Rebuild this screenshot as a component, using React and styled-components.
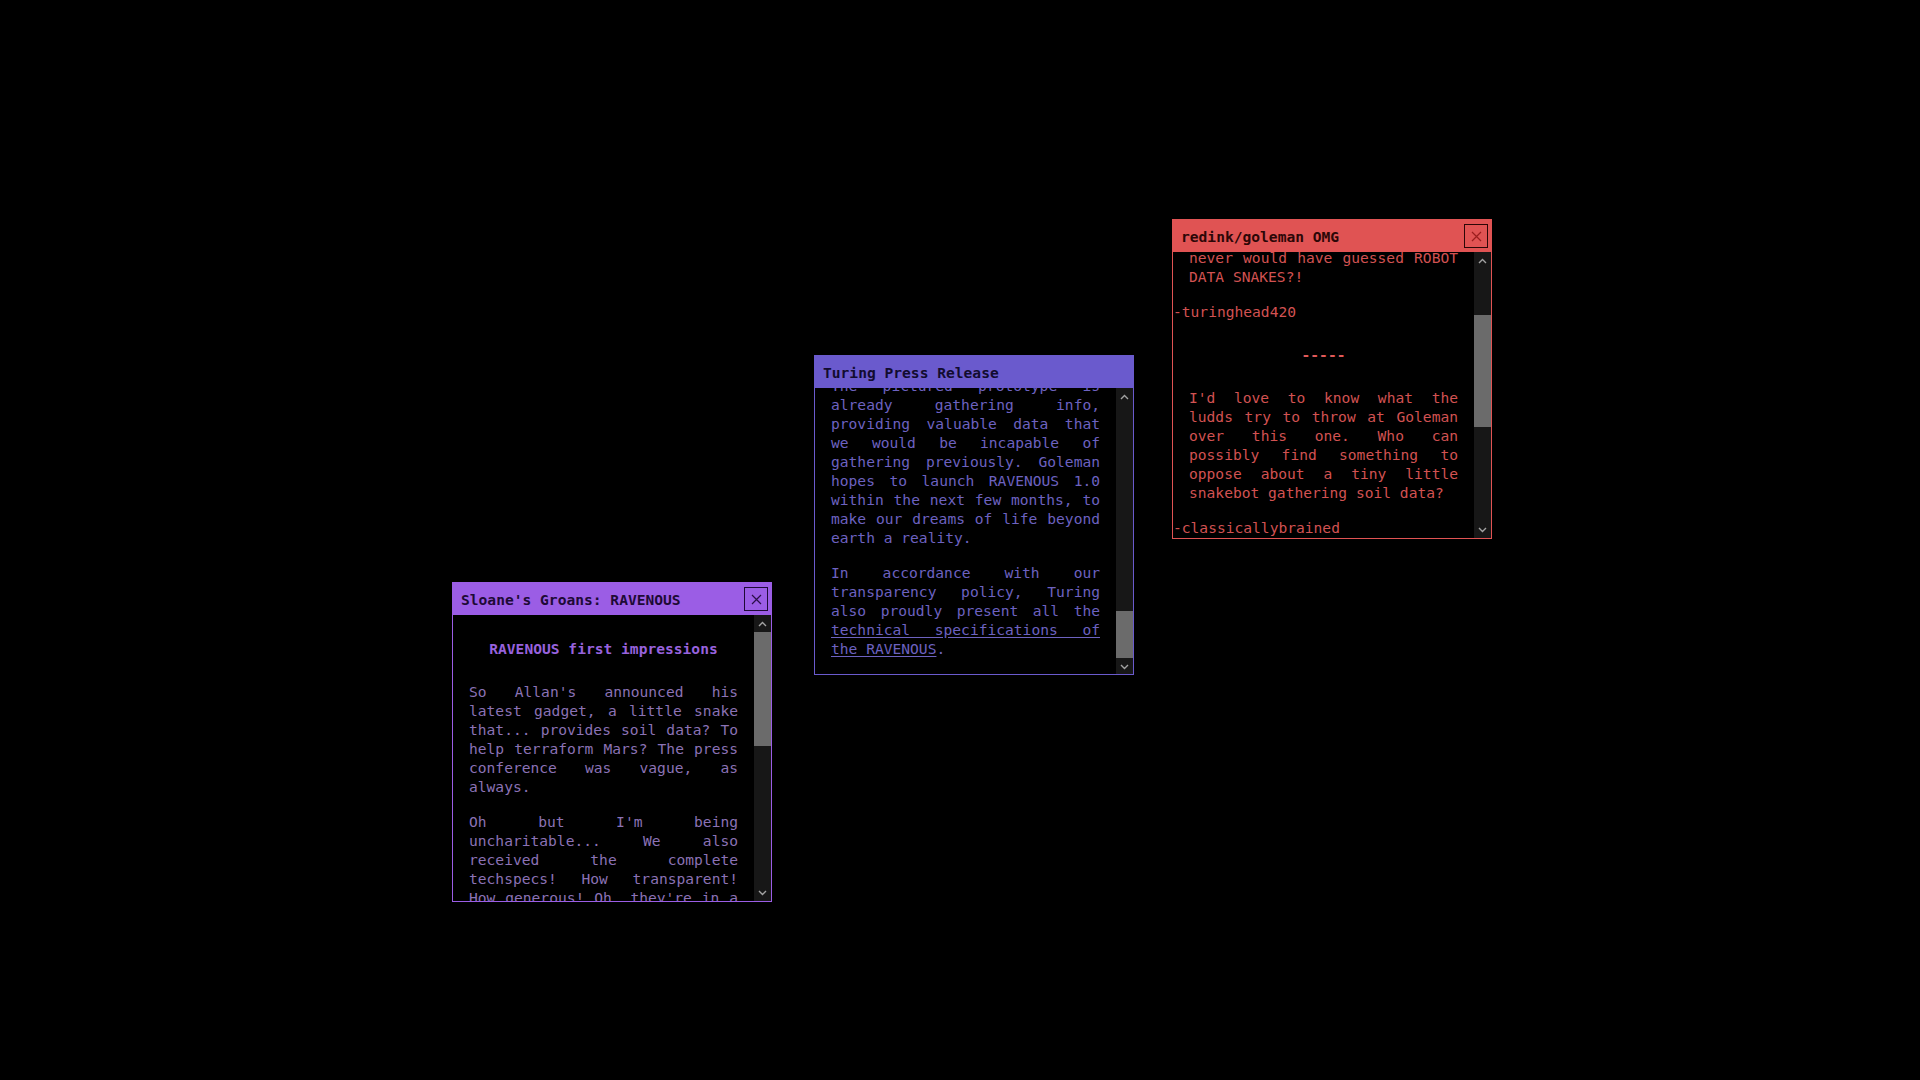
import React, { useEffect, useRef } from "react";
import styled, { createGlobalStyle } from "styled-components";

const themes = {
  purple: { bar: "#9b5de5", ink: "#1e0a36", text: "#8b72b5", head: "#9762dd", link: "#8b72b5" },
  slate: { bar: "#6a5acd", ink: "#120c30", text: "#6d62c0", head: "#7366d8", link: "#6d62c0" },
  red: { bar: "#e05353", ink: "#2c0707", text: "#d25252", head: "#e05a5a", link: "#d25252" },
};

const GlobalStyle = createGlobalStyle`
  html, body {
    margin: 0;
    padding: 0;
    background: #000;
  }
  * {
    box-sizing: border-box;
  }
`;

const Desktop = styled.div`
  position: relative;
  width: 100vw;
  height: 100vh;
  background: #000;
  overflow: hidden;
  font-family: "DejaVu Sans Mono", "Liberation Mono", monospace;
  font-size: 14.6px;
  line-height: 19px;
`;

const Frame = styled.div`
  position: absolute;
  left: ${(p) => p.$x}px;
  top: ${(p) => p.$y}px;
  width: 320px;
  height: 320px;
  display: flex;
  flex-direction: column;
  border: 1px solid ${(p) => p.$t.bar};
  background: #000;
  color: ${(p) => p.$t.text};
`;

const TitleBar = styled.div`
  height: 32px;
  flex: none;
  display: flex;
  align-items: center;
  justify-content: space-between;
  padding: 0 3px 0 8px;
  background: ${(p) => p.$t.bar};
  color: ${(p) => p.$t.ink};
  font-weight: bold;
`;

const CloseButton = styled.button`
  width: 24px;
  height: 24px;
  padding: 0;
  display: flex;
  align-items: center;
  justify-content: center;
  background: transparent;
  border: 1px solid ${(p) => p.$t.ink};
  color: ${(p) => p.$color};
  cursor: pointer;
`;

const Body = styled.div`
  flex: 1;
  display: flex;
  min-height: 0;
`;

const Scroll = styled.div`
  flex: 1;
  position: relative;
  overflow: hidden;
`;

const Inner = styled.div`
  display: flow-root;
`;

const Scrollbar = styled.div`
  width: 17px;
  flex: none;
  display: flex;
  flex-direction: column;
  background: #171717;
`;

const Arrow = styled.div`
  height: 17px;
  flex: none;
  display: flex;
  align-items: center;
  justify-content: center;
  color: #a3a3a3;
`;

const Track = styled.div`
  flex: 1;
  display: flex;
  flex-direction: column;
`;

const Thumb = styled.div`
  margin-top: ${(p) => p.$top}px;
  height: ${(p) => p.$h}px;
  background: #6b6b6b;
`;

const Para = styled.p`
  margin: 16px 0;
  padding: 0 16px;
  text-align: justify;
`;

const Sign = styled.p`
  margin: 16px 0;
  padding: 0;
`;

const Heading = styled.h4`
  margin: 24px 0;
  padding: 0 16px;
  font-size: inherit;
  font-weight: bold;
  text-align: center;
  color: ${(p) => p.$t.head};
`;

const Link = styled.a`
  color: ${(p) => p.$t.link};
  text-decoration: underline;
  text-underline-offset: 2px;
`;

const Chevron = ({ up }) => (
  <svg width="9" height="6" viewBox="0 0 9 6" fill="none">
    <polyline
      points={up ? "1,5 4.5,1.5 8,5" : "1,1 4.5,4.5 8,1"}
      stroke="currentColor"
      strokeWidth="1.4"
    />
  </svg>
);

const CrossIcon = () => (
  <svg width="11" height="11" viewBox="0 0 11 11">
    <path d="M1 1 L10 10 M10 1 L1 10" stroke="currentColor" strokeWidth="1.2" />
  </svg>
);

const Window = ({ t, x, y, title, closable, closeColor, scroll, anchor, thumb, children }) => {
  const ref = useRef(null);

  useEffect(() => {
    const el = ref.current;
    if (!el) return;
    if (scroll === "end") {
      el.scrollTop = el.scrollHeight;
    } else if (anchor !== undefined) {
      const a = el.querySelector("[data-anchor]");
      el.scrollTop = (a ? a.offsetTop : 0) - anchor;
    } else {
      el.scrollTop = 0;
    }
  }, [scroll, anchor]);

  return (
    <Frame $t={t} $x={x} $y={y}>
      <TitleBar $t={t}>
        <span>{title}</span>
        {closable && (
          <CloseButton $t={t} $color={closeColor}>
            <CrossIcon />
          </CloseButton>
        )}
      </TitleBar>
      <Body>
        <Scroll ref={ref}>
          <Inner>{children}</Inner>
        </Scroll>
        <Scrollbar>
          <Arrow>
            <Chevron up />
          </Arrow>
          <Track>
            <Thumb $top={thumb[0]} $h={thumb[1]} />
          </Track>
          <Arrow>
            <Chevron />
          </Arrow>
        </Scrollbar>
      </Body>
    </Frame>
  );
};

export default function App() {
  const { purple, slate, red } = themes;
  return (
    <>
      <GlobalStyle />
      <Desktop>
        <Window
          t={purple}
          x={452}
          y={582}
          title="Sloane's Groans: RAVENOUS"
          closable
          closeColor="#2a0f48"
          thumb={[0, 114]}
        >
          <Heading $t={purple}>RAVENOUS first impressions</Heading>
          <Para>
            So Allan's announced his latest gadget, a little snake that... provides soil data? To
            help terraform Mars? The press conference was vague, as always.
          </Para>
          <Para>
            Oh but I'm being uncharitable... We also received the complete techspecs! How
            transparent! How generous! Oh, they're in a format nobody outside Turing can open.
            Classic Goleman.
          </Para>
          <Para>
            I'll keep digging. If this snake is just sniffing dirt, I'll eat my keyboard.
          </Para>
        </Window>

        <Window
          t={slate}
          x={814}
          y={355}
          title="Turing Press Release"
          scroll="end"
          thumb={[206, 47]}
        >
          <Heading $t={slate}>Introducing RAVENOUS</Heading>
          <Para>
            Turing Industries is proud to announce RAVENOUS, the Remote Autonomous Versatile
            Environmental Nutrient Observation Unit System. RAVENOUS is a compact, serpentine
            robot designed to burrow through regolith and report on the composition of the soil
            it passes through.
          </Para>
          <Para>
            Developed under the direct supervision of CEO Allan Goleman, RAVENOUS represents the
            first step in Turing's long term plan to terraform Mars. Each unit is small enough to
            be deployed by the thousand, and smart enough to coordinate with its siblings.
          </Para>
          <Para>
            The pictured prototype is already gathering info, providing valuable data that we
            would be incapable of gathering previously. Goleman hopes to launch RAVENOUS 1.0
            within the next few months, to make our dreams of life beyond earth a reality.
          </Para>
          <Para>
            In accordance with our transparency policy, Turing also proudly present all the{" "}
            <Link $t={slate} href="#specs">
              technical specifications of the RAVENOUS
            </Link>
            .
          </Para>
        </Window>

        <Window
          t={red}
          x={1172}
          y={219}
          title="redink/goleman OMG"
          closable
          closeColor="#9a1e1e"
          anchor={50}
          thumb={[46, 112]}
        >
          <Heading $t={red}>RAVENOUS IS HERE</Heading>
          <Para>
            Seriously, RAVENOUS is the coolest thing Turing has ever made. Absolutely insane. I
            never would have guessed ROBOT DATA SNAKES?!
          </Para>
          <Sign data-anchor>-turinghead420</Sign>
          <Heading $t={red}>-----</Heading>
          <Para>
            I'd love to know what the ludds try to throw at Goleman over this one. Who can
            possibly find something to oppose about a tiny little snakebot gathering soil data?
          </Para>
          <Sign>-classicallybrained</Sign>
          <Heading $t={red}>-----</Heading>
          <Para>
            Goleman is a visionary. Mars by 2040, you heard it here first.
          </Para>
          <Sign>-redshift_ray</Sign>
        </Window>
      </Desktop>
    </>
  );
}
